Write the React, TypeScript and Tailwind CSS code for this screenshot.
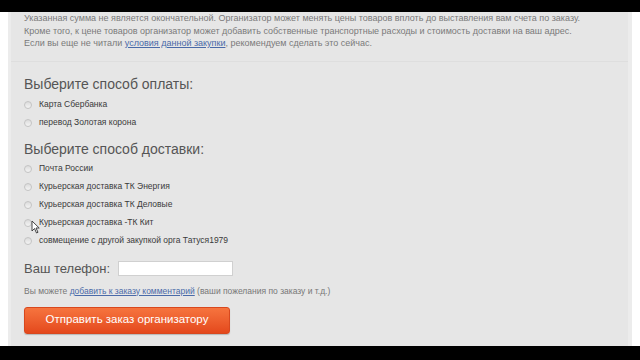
import React from "react";

const Radio = ({ label }: { label: string }) => (
  <div className="flex items-center h-[18px]">
    <span className="w-[8px] h-[8px] rounded-full border border-[#c4c4c4] bg-gradient-to-b from-[#dcdcdc] to-[#f4f4f4] ml-[0px] mr-[7px]" />
    <span className="text-[8.5px] text-[#3a3a3a]">{label}</span>
  </div>
);

export default function App() {
  return (
    <div className="w-[640px] h-[360px] bg-black flex flex-col overflow-hidden" style={{ fontFamily: '"Liberation Sans", Arial, sans-serif' }}>
      <div className="h-[12px] bg-black" />
      <div className="h-[334px] flex relative">
        <div className="w-[8px] bg-white" />
        <div className="w-[3px] bg-[#ececec]" />
        <div className="flex-1 bg-[#e6e6e6] flex flex-col">
          <div className="px-[13px] pt-[0px] pb-[11px] border-b border-[#dedede] text-[9px] leading-[12.5px] text-[#7a7a7a]">
            <div>Указанная сумма не является окончательной. Организатор может менять цены товаров вплоть до выставления вам счета по заказу.</div>
            <div>Кроме того, к цене товаров организатор может добавить собственные транспортные расходы и стоимость доставки на ваш адрес.</div>
            <div>
              Если вы еще не читали <span className="text-[#4a6aa8] underline">условия данной закупки</span>, рекомендуем сделать это сейчас.
            </div>
          </div>
          <div className="px-[13px] pt-[12px] flex flex-col">
            <div className="text-[14px] leading-[20px] text-[#555] mb-[2px]">Выберите способ оплаты:</div>
            <Radio label="Карта Сбербанка" />
            <Radio label="перевод Золотая корона" />
            <div className="text-[14px] leading-[20px] text-[#555] mt-[7px] mb-[1px]">Выберите способ доставки:</div>
            <Radio label="Почта России" />
            <Radio label="Курьерская доставка ТК Энергия" />
            <Radio label="Курьерская доставка ТК Деловые" />
            <Radio label="Курьерская доставка -ТК Кит" />
            <Radio label="совмещение с другой закупкой орга Татуся1979" />
            <div className="flex items-center mt-[11px] h-[16px]">
              <span className="text-[13px] text-[#555] mr-[8px]">Ваш телефон:</span>
              <div className="w-[115px] h-[15px] bg-white border border-[#d0d0d0]" />
            </div>
            <div className="text-[8.5px] text-[#777] mt-[8px] leading-[12px]">
              Вы можете <span className="text-[#4a6aa8] underline">добавить к заказу комментарий</span> (ваши пожелания по заказу и т.д.)
            </div>
            <div className="mt-[10px] w-[206px] h-[27px] rounded-[3px] border border-[#d8481e] bg-gradient-to-b from-[#f6743e] to-[#e4481c] flex items-center justify-center text-white text-[11.5px] shadow-[0_1px_1px_rgba(0,0,0,0.2)]">
              Отправить заказ организатору
            </div>
          </div>
        </div>
        <div className="w-[4px] bg-[#ececec]" />
        <div className="w-[8px] bg-white" />
        <svg className="absolute left-[31px] top-[208px]" width="9" height="14" viewBox="0 0 9 14">
          <path d="M1 1 L1 11 L3.5 8.5 L5.5 13 L7 12.3 L5 8 L8.2 8 Z" fill="white" stroke="#333" strokeWidth="0.9" />
        </svg>
      </div>
      <div className="flex-1 bg-black" />
    </div>
  );
}
